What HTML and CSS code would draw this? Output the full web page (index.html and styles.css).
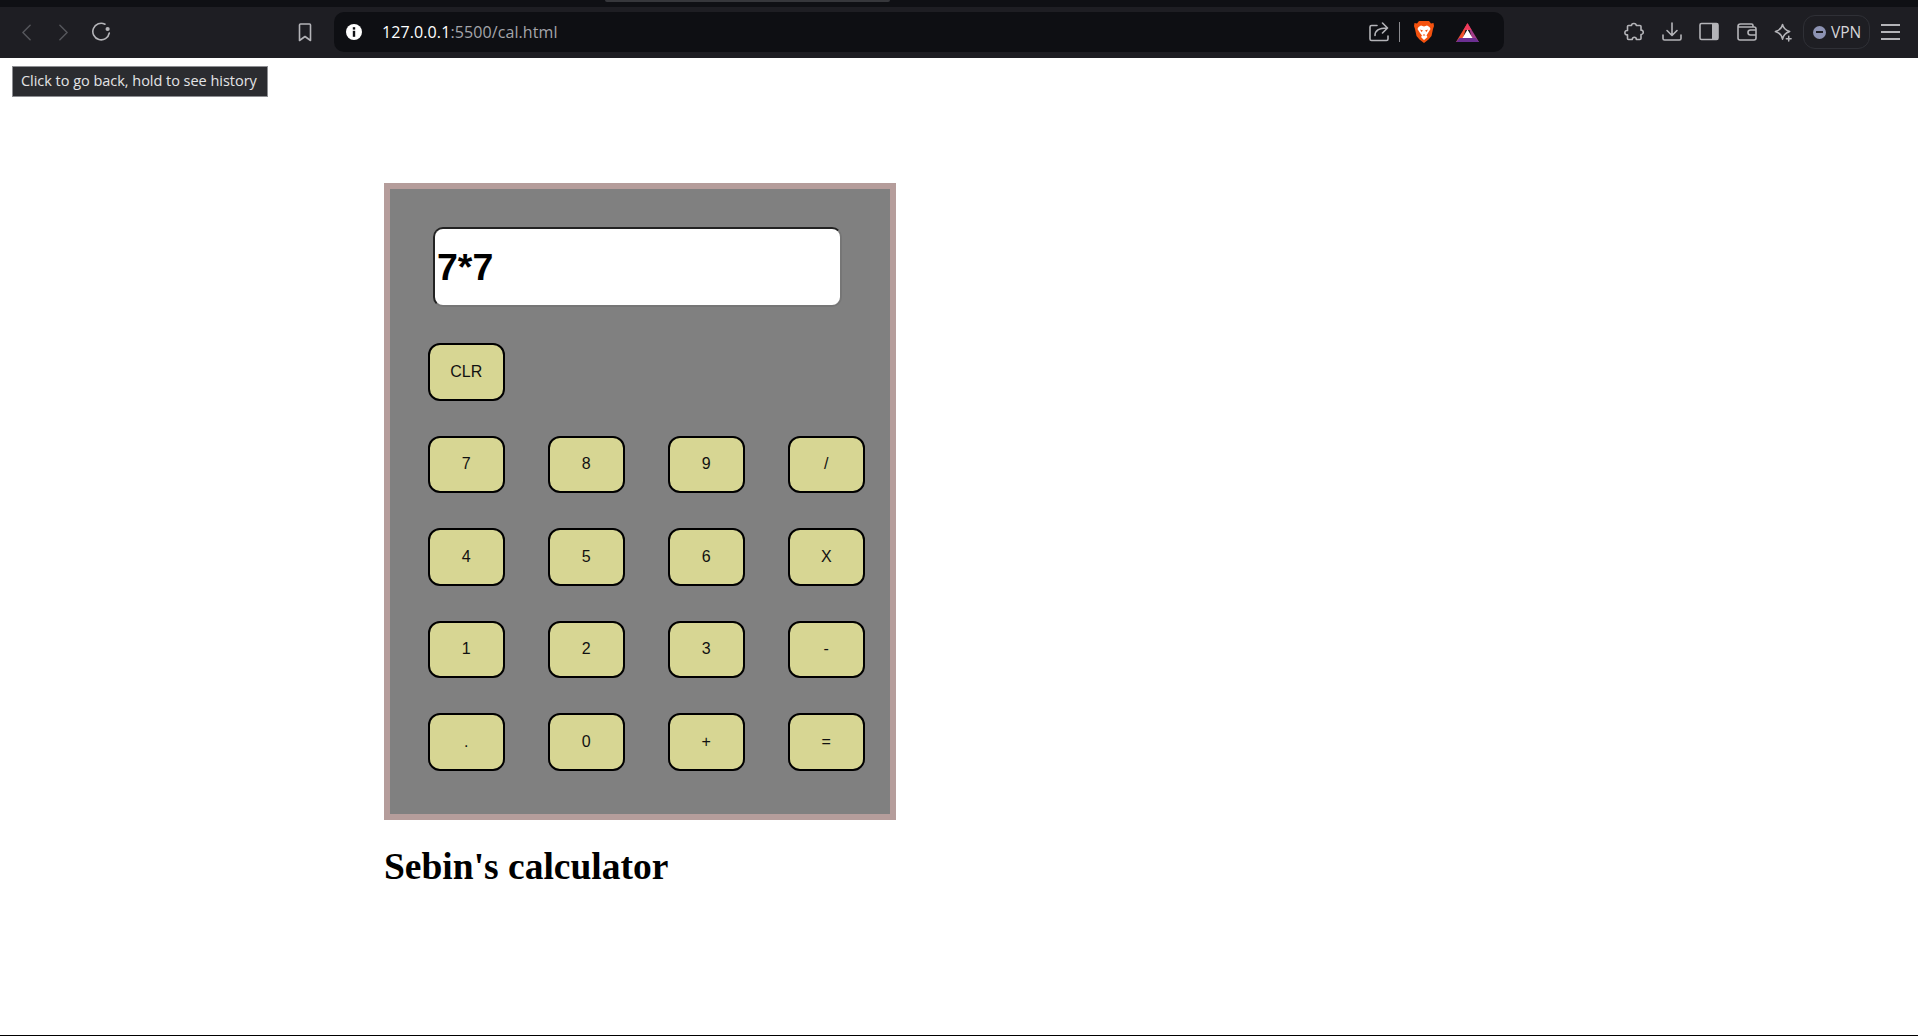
FILE: index.html
```html
<!DOCTYPE html>
<html lang="en">
<head>
<meta charset="utf-8">
<title>Calculator</title>
<link rel="stylesheet" href="styles.css">
</head>
<body>
<header class="browser">
  <div class="tabstrip"><div class="tab-edge"></div></div>
  <div class="toolbar">
    <div class="nav">
      <svg class="ico-nav" viewBox="0 0 10 18"><path class="dim" d="M9 1 1 9l8 8"/></svg>
      <svg class="ico-nav" viewBox="0 0 10 18"><path class="dim" d="M1 1l8 8-8 8"/></svg>
      <svg class="ico-reload" viewBox="0 0 20 20"><path class="line" d="M14 2.2A8.3 8.3 0 1 0 18.3 11"/><circle class="fill" cx="16.6" cy="7" r="2.1"/></svg>
    </div>
    <svg class="ico-bookmark" viewBox="0 0 14 19"><path class="line" d="M2.5 1h9q1 0 1 1v15.5L7 13.5l-5.500 4V2q0-1 1-1z"/></svg>
    <div class="address">
      <svg class="ico-info" viewBox="0 0 16 16"><circle cx="8" cy="8" r="8" fill="#fff"/><rect x="6.800" y="3.200" width="2.400" height="2.400" fill="#0f1014"/><rect x="6.800" y="6.800" width="2.400" height="6" fill="#0f1014"/></svg>
      <span class="url">127.0.0.1<span class="url-dim">:5500/cal.html</span></span>
      <div class="address-actions">
        <svg class="ico-share" viewBox="0 0 20 20"><path class="line" d="M8 3.500H2.500q-1.500 0-1.500 1.500v12q0 1.500 1.500 1.500h15q1.500 0 1.500-1.500v-3M6 13.500c0-5 4-7.500 12-7.500M13.500 1 18.500 6l-5 5"/></svg>
        <span class="divider"></span>
        <svg class="ico-brave" viewBox="0 0 20 22"><path fill="#f4520f" d="M5 0h10l2 2.500 2.500-.5.500 3-1 3-1.500 7-3 3.500L10 22l-4.500-3.500-3-3.500L1 8 0 5l.5-3L3 2.500z"/><path fill="#fff" d="M4.500 6 7 4.500l3 1 3-1L15.500 6l1 2-2.500 4-1.500 2.500 1 1.500L10 19l-3-3 1-1.500L6 12 3.500 8z"/><path fill="#f4520f" d="M6 8.500l3 1-1.500 1.500zM14 8.500l-3 1 1.500 1.500zM8.500 14.500h3L10 13z"/></svg>
        <svg class="ico-bat" viewBox="0 0 23 19"><path fill="#f0502c" d="M11.500 0 0 19h6z"/><path fill="#a23c8a" d="M11.500 0 23 19h-6z"/><path fill="#6b2f92" d="M0 19l3.500-4h16l3.500 4z"/><path fill="#ee3a5c" d="M11.500 0l4 7h-8z"/><path fill="#fff" d="M11.500 6.500 16.500 15h-10z"/></svg>
      </div>
    </div>
    <div class="extensions">
      <svg class="ico-tool" viewBox="0 0 20 20"><path class="line" d="M7.500 3.500C7.500 1 12 .5 12.300 3.500h3.700q1 0 1 1v3.700c2.500-.6 3.500 4 0 4.300v4q0 1-1 1h-3.700c.5-3-4.300-3-4 0H4.500q-1 0-1-1v-3.700c-3.500.7-3.500-5 0-4.300V4.500q0-1 1-1z"/></svg>
      <svg class="ico-tool" viewBox="0 0 20 20"><path class="line" d="M10 1v12M5 8.500l5 5 5-5M1 13v3.500q0 1.500 1.500 1.500h15q1.500 0 1.500-1.500V13"/></svg>
      <svg class="ico-tool" viewBox="0 0 20 20"><rect class="line" x="1" y="1.500" width="18" height="16" rx="1.500"/><rect class="fill" x="13" y="1.500" width="6" height="16"/></svg>
      <svg class="ico-tool" viewBox="0 0 20 20"><path class="line" d="M16 5V3.500q0-1.500-1.500-1.500h-11Q1 2 1 4.500V16q0 2 2 2h14q2 0 2-2V7q0-2-2-2H2M19 8h-5.500q-2.500 0-2.500 2.500t2.500 2.500H19"/></svg>
      <svg class="ico-leo" viewBox="0 0 20 20"><path class="line" d="M9 1.500C9.700 5.500 12 7.500 16.500 9 12 10.500 9.700 12.500 9 17 8.300 12.500 6 10.500 1.500 9 6 7.500 8.300 5.500 9 1.500z"/><path class="line" d="M15.500 14v5M13 16.500h5"/></svg>
    </div>
    <div class="vpn"><span class="vpn-dot"><span class="vpn-minus"></span></span><span>VPN</span></div>
    <div class="menu"><span></span><span></span><span></span></div>
  </div>
</header>
<div class="tooltip">Click to go back, hold to see history</div>
<main class="page">
  <div class="calc">
    <div class="display">7*7</div>
    <div class="keys">
      <button class="key key-wide">CLR</button>
      <button class="key">7</button><button class="key">8</button><button class="key">9</button><button class="key">/</button>
      <button class="key">4</button><button class="key">5</button><button class="key">6</button><button class="key">X</button>
      <button class="key">1</button><button class="key">2</button><button class="key">3</button><button class="key">-</button>
      <button class="key">.</button><button class="key">0</button><button class="key">+</button><button class="key">=</button>
    </div>
  </div>
  <h1 class="title">Sebin's calculator</h1>
</main>
<div class="bottom-line"></div>
</body>
</html>
```
FILE: styles.css
```css
* { box-sizing: border-box; }
html, body { margin: 0; height: 100%; }
body {
  position: relative;
  height: 1036px;
  overflow: hidden;
  background: #fff;
  display: flex;
  flex-direction: column;
  font-family: "Liberation Sans", Arial, sans-serif;
}

/* browser chrome */
.browser { height: 58px; flex: none; }
.tabstrip { height: 7px; background: #0f1014; padding-left: 605px; }
.tab-edge { width: 285px; height: 2px; background: #36373b; border-radius: 0 0 4px 4px; }
.toolbar { height: 51px; background: #1e1e23; display: flex; align-items: center; padding-bottom: 1px; }
.nav { display: flex; align-items: center; width: 114px; padding-left: 22px; flex: none; }
.ico-nav { width: 9px; height: 17px; margin-right: 28px; }
.ico-reload { width: 20px; height: 20px; margin-left: -5px; }
.dim, .line { fill: none; stroke-width: 1.6; stroke-linecap: round; stroke-linejoin: round; }
.dim { stroke: #56575c; }
.line { stroke: #b4b4b8; }
.fill { fill: #b4b4b8; }
.ico-bookmark { width: 14px; height: 19px; margin-left: 184px; flex: none; }
.address {
  width: 1170px;
  height: 40px;
  margin-left: 22px;
  background: #0e0f13;
  border-radius: 10px;
  display: flex;
  align-items: center;
  padding-left: 12px;
  flex: none;
}
.ico-info { width: 16px; height: 16px; flex: none; }
.url {
  margin-left: 20px;
  font-family: "Open Sans", sans-serif;
  font-size: 16px;
  letter-spacing: 0.100px;
  color: #fff;
}
.url-dim { color: #a4a5aa; }
.address-actions { margin-left: auto; display: flex; align-items: center; padding-right: 25px; }
.ico-share { width: 20px; height: 20px; }
.divider { width: 1px; height: 20px; background: #8b8b8f; margin: 0 14px 0 10px; }
.ico-brave { width: 20px; height: 22px; }
.ico-bat { width: 23px; height: 19px; margin-left: 22px; }
.extensions { display: flex; align-items: center; gap: 17.500px; margin-left: 120px; flex: none; }
.ico-tool { width: 20px; height: 20px; }
.ico-leo { width: 19px; height: 19px; }
.vpn {
  width: 67px;
  height: 34px;
  margin-left: 10px;
  border: 1px solid #2f3036;
  border-radius: 12px;
  display: flex;
  align-items: center;
  gap: 5px;
  padding-left: 9px;
  color: #d5d5d9;
  font-family: "Open Sans", sans-serif;
  font-size: 15.500px;
  flex: none;
}
.vpn-dot { width: 13px; height: 13px; border-radius: 50%; background: #8d93b3; display: flex; align-items: center; justify-content: center; }
.vpn-minus { width: 7px; height: 2px; background: #1e1e23; }
.menu { width: 19px; margin-left: 11px; display: flex; flex-direction: column; gap: 5px; flex: none; }
.menu span { height: 2px; background: #b4b4b8; }

/* tooltip */
.tooltip {
  position: absolute;
  left: 12px;
  top: 66px;
  width: 256px;
  height: 31px;
  background: #2b2c30;
  border: 1px solid #8d8e92;
  color: #e4e4e6;
  font-family: "Open Sans", sans-serif;
  font-size: 14.500px;
  letter-spacing: -0.030px;
  line-height: 27px;
  padding-left: 8px;
  white-space: nowrap;
}

/* page */
.page { padding: 125px 0 0 384px; flex: 1; }
.calc {
  width: 512px;
  height: 637px;
  border: 6px solid #b59d9b;
  background: #808080;
  padding: 38px;
}
.display {
  width: 409px;
  height: 80px;
  margin-left: 5px;
  background: #fff;
  border: 2px solid;
  border-color: #222 #767676 #767676 #222;
  border-radius: 10px;
  font-weight: bold;
  font-size: 37.500px;
  line-height: 76px;
  padding-left: 2px;
  color: #000;
}
.keys {
  margin-top: 36px;
  display: grid;
  grid-template-columns: repeat(4, 76.500px);
  grid-auto-rows: 57.500px;
  column-gap: 43.500px;
  row-gap: 35px;
}
.key {
  border: 2px solid #000;
  border-radius: 12px;
  background: #d7d693;
  color: #111;
  font-family: "Liberation Sans", Arial, sans-serif;
  font-size: 16px;
  padding: 0;
}
.key-wide { grid-column: 1 / -1; width: 76.500px; }
.title {
  margin: 25px 0 0;
  font-family: "Liberation Serif", "Times New Roman", serif;
  font-size: 37.500px;
  font-weight: bold;
  color: #000;
}
.bottom-line { height: 1px; background: #000; flex: none; }
```
